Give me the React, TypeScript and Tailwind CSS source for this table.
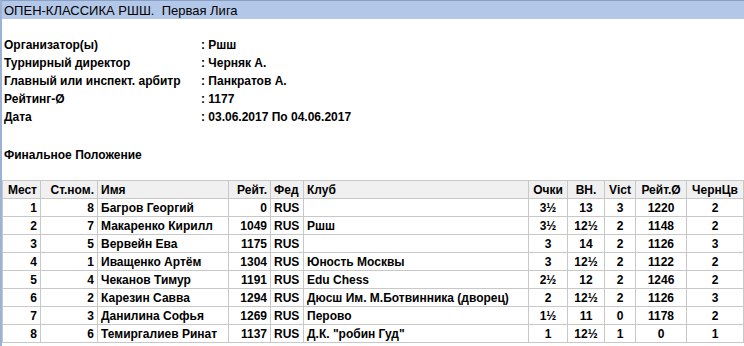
import React from "react";

type Row = [string, string, string, string, string, string, string, string, string, string, string];

const rows: Row[] = [
  ["1", "8", "Багров Георгий", "0", "RUS", "", "3½", "13", "3", "1220", "2"],
  ["2", "7", "Макаренко Кирилл", "1049", "RUS", "Ршш", "3½", "12½", "2", "1148", "2"],
  ["3", "5", "Вервейн Ева", "1175", "RUS", "", "3", "14", "2", "1126", "3"],
  ["4", "1", "Иващенко Артём", "1304", "RUS", "Юность Москвы", "3", "12½", "2", "1122", "2"],
  ["5", "4", "Чеканов Тимур", "1191", "RUS", "Edu Chess", "2½", "12", "2", "1246", "2"],
  ["6", "2", "Карезин Савва", "1294", "RUS", "Дюсш Им. М.Ботвинника (дворец)", "2", "12½", "2", "1126", "3"],
  ["7", "3", "Данилина Софья", "1269", "RUS", "Перово", "1½", "11", "0", "1178", "2"],
  ["8", "6", "Темиргалиев Ринат", "1137", "RUS", "Д.К. \"робин Гуд\"", "1", "12½", "1", "0", "1"],
];

const info: [string, string][] = [
  ["Организатор(ы)", ": Ршш"],
  ["Турнирный директор", ": Черняк А."],
  ["Главный или инспект. арбитр", ": Панкратов А."],
  ["Рейтинг-Ø", ": 1177"],
  ["Дата", ": 03.06.2017 По 04.06.2017"],
];

const aligns = [
  "text-right",
  "text-right",
  "text-left",
  "text-right",
  "text-left",
  "text-left",
  "text-center",
  "text-center",
  "text-center",
  "text-center",
  "text-center",
];

const headers = ["Мест", "Ст.ном.", "Имя", "Рейт.", "Фед", "Клуб", "Очки", "ВН.", "Vict", "Рейт.Ø", "ЧернЦв"];

export default function App() {
  return (
    <div
      className="w-[744px] h-[346px] bg-white text-black overflow-hidden border-l-2 border-[#9cb2d4]"
      style={{ fontFamily: '"Liberation Sans", Arial, sans-serif' }}
    >
      <div className="h-[19px] bg-[#b3c8e8] border-t border-[#8aa0c2] flex items-center pl-[2px] text-[13px] leading-none">
        ОПЕН-КЛАССИКА РШШ.&nbsp;&nbsp;Первая Лига
      </div>
      <div className="pt-[17px] pl-[2px] text-[12px] font-bold">
        {info.map(([k, v]) => (
          <div key={k} className="flex h-[18px] items-center">
            <div className="w-[197px]">{k}</div>
            <div>{v}</div>
          </div>
        ))}
      </div>
      <div className="pl-[2px] mt-[20px] h-[18px] flex items-center text-[12px] font-bold">Финальное Положение</div>
      <table className="mt-[16px] table-fixed border-collapse w-[741px] text-[12px] font-bold leading-none">
        <colgroup>
          <col className="w-[38px]" />
          <col className="w-[57px]" />
          <col className="w-[131px]" />
          <col className="w-[42px]" />
          <col className="w-[33px]" />
          <col className="w-[225px]" />
          <col className="w-[39px]" />
          <col className="w-[37px]" />
          <col className="w-[31px]" />
          <col className="w-[51px]" />
          <col className="w-[57px]" />
        </colgroup>
        <thead>
          <tr className="bg-[#f0f0f0]">
            {headers.map((h, i) => (
              <th
                key={h}
                className={`${aligns[i]} h-[18px] px-[3px] py-0 border border-[#c8c8c8] font-bold whitespace-nowrap`}
              >
                {h}
              </th>
            ))}
          </tr>
        </thead>
        <tbody>
          {rows.map((r) => (
            <tr key={r[0]}>
              {r.map((c, i) => (
                <td
                  key={i}
                  className={`${aligns[i]} h-[18px] px-[3px] py-0 border border-[#c8c8c8] whitespace-nowrap`}
                >
                  {c}
                </td>
              ))}
            </tr>
          ))}
        </tbody>
      </table>
    </div>
  );
}
